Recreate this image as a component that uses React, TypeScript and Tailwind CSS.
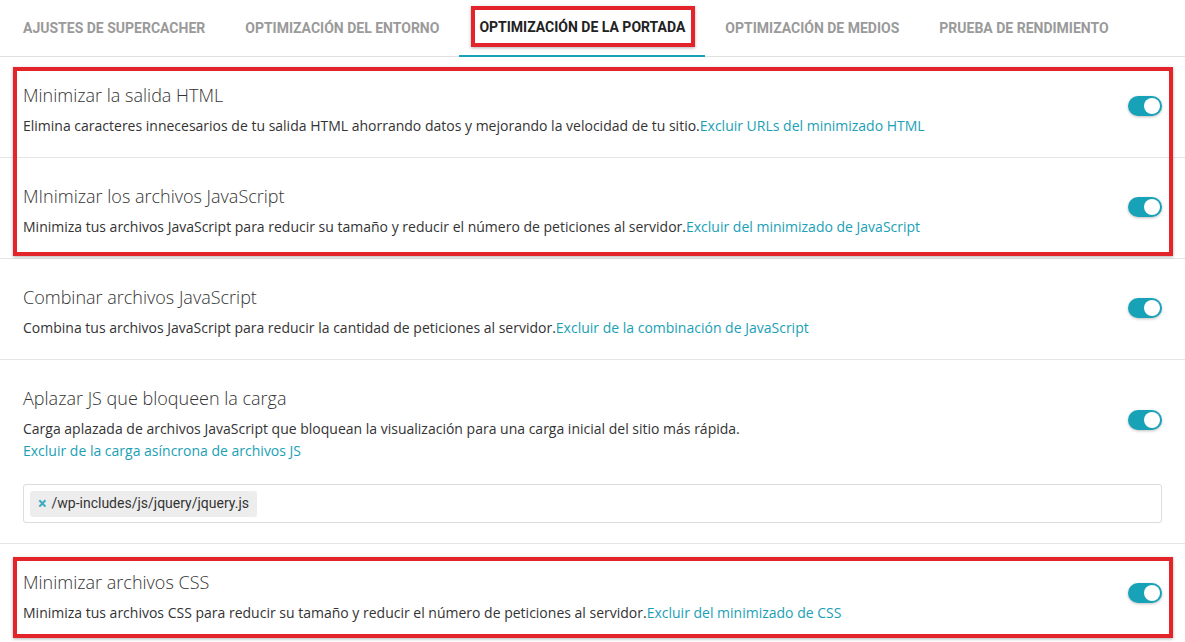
import React from "react";

const tabs = [
  "Ajustes de SuperCacher",
  "Optimización del entorno",
  "Optimización de la portada",
  "Optimización de medios",
  "Prueba de rendimiento",
];

function Toggle() {
  return (
    <div className="w-[34px] h-[20px] mb-[7px] rounded-full bg-[#17a2b8] shadow-[0_1px_3px_rgba(0,0,0,0.25)] flex items-center justify-end pr-[2px] shrink-0">
      <div className="w-[16px] h-[16px] rounded-full bg-white" />
    </div>
  );
}

function Row({
  title,
  desc,
  link,
  last,
}: {
  title: string;
  desc: string;
  link: string;
  last?: boolean;
}) {
  return (
    <div className={`flex items-center px-[23px] pt-[25px] pb-[20px] ${last ? "" : "border-b border-[#e5e5e5]"}`}>
      <div className="flex-1">
        <h3 className="text-[18px] font-light text-[#333] leading-[26px] mb-[7px]">{title}</h3>
        <p className="text-[14px] text-[#333] leading-[22px]">
          {desc}
          <a className="text-[#1a9fb5]">{link}</a>
        </p>
      </div>
      <Toggle />
    </div>
  );
}

export default function App() {
  return (
    <div className="bg-white w-[1185px] min-h-[642px] overflow-hidden font-['Open_Sans',sans-serif]">
      {/* Tabs */}
      <div className="relative flex border-b border-[#e0e0e0] h-[57px] pl-[3px]">
        {tabs.map((t, i) => (
          <div
            key={t}
            className={`px-[20px] flex items-center uppercase font-bold text-[14px] font-['Roboto',sans-serif] ${
              i === 2 ? "text-[#222] border-b-2 border-[#17a2b8] -mb-px" : "text-[#9a9a9a]"
            }`}
          >
            {t}
          </div>
        ))}
        <div className="absolute left-[471px] top-[6px] w-[224px] h-[41px] border-4 border-[#e4242b] shadow-[0_1px_3px_rgba(0,0,0,0.3)]" />
      </div>

      <div className="relative">
        <Row
          title="Minimizar la salida HTML"
          desc="Elimina caracteres innecesarios de tu salida HTML ahorrando datos y mejorando la velocidad de tu sitio."
          link="Excluir URLs del minimizado HTML"
        />
        <Row
          title="MInimizar los archivos JavaScript"
          desc="Minimiza tus archivos JavaScript para reducir su tamaño y reducir el número de peticiones al servidor."
          link="Excluir del minimizado de JavaScript"
        />
        <div className="absolute left-[13px] top-[10px] w-[1160px] h-[189px] border-4 border-[#e4242b] shadow-[0_1px_3px_rgba(0,0,0,0.3)]" />
      </div>

      <Row
        title="Combinar archivos JavaScript"
        desc="Combina tus archivos JavaScript para reducir la cantidad de peticiones al servidor."
        link="Excluir de la combinación de JavaScript"
      />

      <div className="px-[23px] pt-[25px] pb-[20px] border-b border-[#e5e5e5]">
        <div className="flex items-center">
          <div className="flex-1">
            <h3 className="text-[18px] font-light text-[#333] leading-[26px] mb-[7px]">Aplazar JS que bloqueen la carga</h3>
            <p className="text-[14px] text-[#333] leading-[22px]">
              Carga aplazada de archivos JavaScript que bloquean la visualización para una carga inicial del sitio más rápida.
            </p>
            <a className="block text-[14px] text-[#1a9fb5] leading-[22px]">Excluir de la carga asíncrona de archivos JS</a>
          </div>
          <Toggle />
        </div>
        <div className="mt-[22px] h-[39px] border border-[#dcdcdc] rounded-[3px] flex items-center px-[6px]">
          <div className="flex items-center gap-[5px] bg-[#ededed] rounded-[3px] h-[26px] px-[8px] text-[14px] text-[#333] font-['Roboto',sans-serif]">
            <span className="text-[#3aa9c0] font-bold text-[16px] leading-none">×</span>
            <span>/wp-includes/js/jquery/jquery.js</span>
          </div>
        </div>
      </div>

      <div className="relative">
        <Row
          last
          title="Minimizar archivos CSS"
          desc="Minimiza tus archivos CSS para reducir su tamaño y reducir el número de peticiones al servidor."
          link="Excluir del minimizado de CSS"
        />
        <div className="absolute left-[13px] top-[13px] w-[1160px] h-[81px] border-4 border-[#e4242b] shadow-[0_1px_3px_rgba(0,0,0,0.3)]" />
      </div>
    </div>
  );
}
